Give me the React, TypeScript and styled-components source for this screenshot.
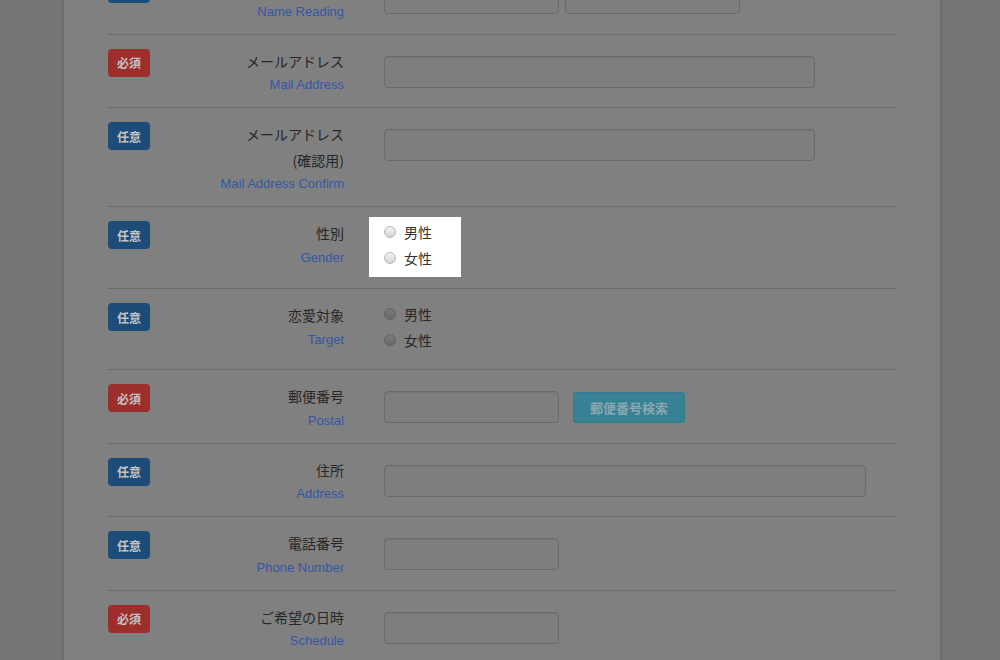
import React from "react";
import styled, { createGlobalStyle } from "styled-components";

const GlobalStyle = createGlobalStyle`
  html, body {
    margin: 0;
    padding: 0;
    background: #757575;
  }
  body {
    font-family: "Liberation Sans", "Noto Sans CJK JP", sans-serif;
  }
`;

type Kind = "required" | "optional";

type Field =
  | { type: "text"; widths: number[] }
  | { type: "radio"; options: string[]; spotlight?: boolean }
  | { type: "postal"; width: number; button: string };

interface FormRow {
  kind: Kind;
  label: string[];
  en: string;
  field: Field;
}

const rows: FormRow[] = [
  { kind: "optional", label: ["フリガナ"], en: "Name Reading", field: { type: "text", widths: [175, 175] } },
  { kind: "required", label: ["メールアドレス"], en: "Mail Address", field: { type: "text", widths: [431] } },
  { kind: "optional", label: ["メールアドレス", "(確認用)"], en: "Mail Address Confirm", field: { type: "text", widths: [431] } },
  { kind: "optional", label: ["性別"], en: "Gender", field: { type: "radio", options: ["男性", "女性"], spotlight: true } },
  { kind: "optional", label: ["恋愛対象"], en: "Target", field: { type: "radio", options: ["男性", "女性"] } },
  { kind: "required", label: ["郵便番号"], en: "Postal", field: { type: "postal", width: 175, button: "郵便番号検索" } },
  { kind: "optional", label: ["住所"], en: "Address", field: { type: "text", widths: [482] } },
  { kind: "optional", label: ["電話番号"], en: "Phone Number", field: { type: "text", widths: [175] } },
  { kind: "required", label: ["ご希望の日時"], en: "Schedule", field: { type: "text", widths: [175] } },
];

const App = () => {
  // フィールド描画
  const renderField = (field: Field) => {
    if (field.type === "text") {
      return (
        <InputLine>
          {field.widths.map((w, idx) => (
            <TextInput key={idx} $width={w} />
          ))}
        </InputLine>
      );
    }
    if (field.type === "postal") {
      return (
        <InputLine>
          <TextInput $width={field.width} />
          <SearchButton type="button">{field.button}</SearchButton>
        </InputLine>
      );
    }
    const group = (
      <RadioGroup>
        {field.options.map((opt) => (
          <RadioOption key={opt}>
            <RadioDot $lit={!!field.spotlight} />
            <RadioText $lit={!!field.spotlight}>{opt}</RadioText>
          </RadioOption>
        ))}
      </RadioGroup>
    );
    return field.spotlight ? <Spotlight>{group}</Spotlight> : group;
  };

  return (
    <Page>
      <GlobalStyle />
      <Panel>
        {rows.map((row, idx) => (
          <Row key={idx}>
            <Badge $kind={row.kind}>{row.kind === "required" ? "必須" : "任意"}</Badge>
            <LabelBox>
              {row.label.map((line) => (
                <LabelJa key={line}>{line}</LabelJa>
              ))}
              <LabelEn>{row.en}</LabelEn>
            </LabelBox>
            <FieldBox>{renderField(row.field)}</FieldBox>
          </Row>
        ))}
      </Panel>
    </Page>
  );
};

const Page = styled.div`
  height: 660px;
  overflow: hidden;
  background: #757575;
`;

const Panel = styled.div`
  box-sizing: border-box;
  width: 878px;
  margin: -39px 0 0 63px;
  padding: 0 44px 40px;
  background: #808080;
  border-left: 1px solid #6a6a6a;
  border-right: 1px solid #6a6a6a;
  box-shadow: 0 0 3px rgba(0, 0, 0, 0.12);
`;

const Row = styled.div`
  display: flex;
  align-items: flex-start;
  padding: 14px 0 11px;
  border-bottom: 1px solid #6d6d6d;
`;

const Badge = styled.div<{ $kind: Kind }>`
  flex: 0 0 42px;
  height: 28px;
  display: flex;
  align-items: center;
  justify-content: center;
  border-radius: 4px;
  background: ${(p) => (p.$kind === "required" ? "#9c2f2b" : "#1e4c79")};
  color: #c4c4c4;
  font-family: "Noto Sans CJK JP", sans-serif;
  font-size: 12px;
  font-weight: 700;
`;

const LabelBox = styled.div`
  width: 194px;
  text-align: right;
`;

const LabelJa = styled.div`
  font-family: "Noto Sans CJK JP", sans-serif;
  font-size: 14px;
  line-height: 25.5px;
  color: #272727;
`;

const LabelEn = styled.div`
  font-family: "Liberation Sans", sans-serif;
  font-size: 13px;
  line-height: 22px;
  color: #3557a6;
`;

const FieldBox = styled.div`
  margin-left: 40px;
`;

const InputLine = styled.div`
  display: flex;
  align-items: center;
  gap: 6px;
  margin-top: 7px;
`;

const TextInput = styled.div<{ $width: number }>`
  box-sizing: border-box;
  width: ${(p) => p.$width}px;
  height: 32px;
  border: 1px solid #6a6a6a;
  border-radius: 4px;
  background: #7e7e7e;
  box-shadow: inset 0 1px 1px rgba(0, 0, 0, 0.06);
`;

const SearchButton = styled.button`
  box-sizing: border-box;
  width: 112px;
  height: 31px;
  margin-left: 8px;
  border: 1px solid #347a8a;
  border-radius: 3px;
  background: #378194;
  color: #8aa8b0;
  font-family: "Noto Sans CJK JP", sans-serif;
  font-size: 13px;
  font-weight: 700;
  padding: 0;
`;

const Spotlight = styled.div`
  position: relative;
  z-index: 2;
  width: 48px;
  margin: -4px 0 0 -15px;
  padding: 4px 29px 1px 15px;
  background: #ffffff;
`;

const RadioGroup = styled.div`
  margin-top: -2px;
  padding-bottom: 5px;
`;

const RadioOption = styled.div`
  display: flex;
  align-items: center;
  height: 26px;
`;

const RadioDot = styled.span<{ $lit: boolean }>`
  box-sizing: border-box;
  width: 12px;
  height: 12px;
  margin-right: 8px;
  border-radius: 50%;
  border: 1px solid ${(p) => (p.$lit ? "#b8b8b8" : "#626262")};
  background: ${(p) =>
    p.$lit
      ? "linear-gradient(#f4f4f4, #d4d4d4)"
      : "linear-gradient(#7a7a7a, #6a6a6a)"};
`;

const RadioText = styled.span<{ $lit: boolean }>`
  font-family: "Noto Sans CJK JP", sans-serif;
  font-size: 14px;
  color: ${(p) => (p.$lit ? "#333333" : "#272727")};
`;

export default App;
